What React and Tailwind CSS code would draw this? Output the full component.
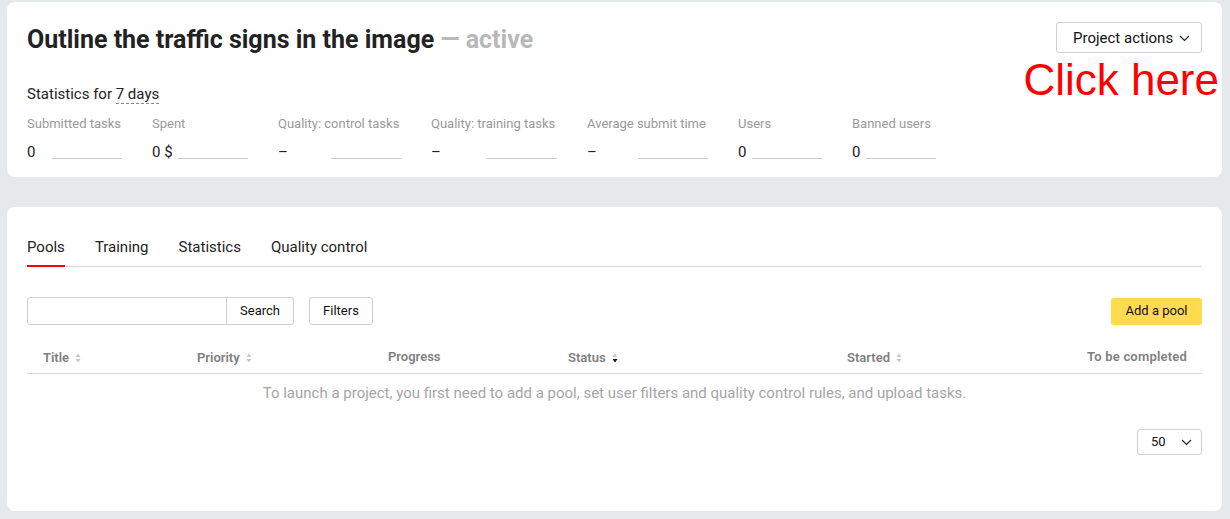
import React from "react";

const font = { fontFamily: "Roboto, 'Liberation Sans', sans-serif" };

function SortIcon({ active }) {
    return (
        <svg width="6" height="10" viewBox="0 0 6 10" className="ml-[6px] inline-block">
            <path d="M3 0.5 L5.5 4 L0.5 4 Z" fill="#c7c7c7" />
            <path d="M3 9.5 L5.5 6 L0.5 6 Z" fill={active ? "#111" : "#c7c7c7"} />
        </svg>
    );
}

function Chevron() {
    return (
        <svg width="11" height="7" viewBox="0 0 11 7" fill="none">
            <path d="M1 1 L5.5 5.5 L10 1" stroke="#222" strokeWidth="1.2" />
        </svg>
    );
}

const stats = [
    { label: "Submitted tasks", value: "0", w: "w-[95px]" },
    { label: "Spent", value: "0 $", w: "w-[96px]" },
    { label: "Quality: control tasks", value: "–", w: "w-[123px]" },
    { label: "Quality: training tasks", value: "–", w: "w-[126px]" },
    { label: "Average submit time", value: "–", w: "w-[121px]" },
    { label: "Users", value: "0", w: "w-[84px]" },
    { label: "Banned users", value: "0", w: "w-[84px]" },
];

export default function App() {
    return (
        <div className="min-h-screen bg-[#e6e9ec] pt-[2px] pl-[7px] pr-[8px] pb-2" style={font}>
            {/* header card */}
            <div className="relative h-[175px] rounded-lg bg-white px-5 pt-5">
                <div className="flex items-start justify-between">
                    <h1 className="mt-[2px] text-[25px] leading-[32px] font-bold text-[#222]">
                        Outline the traffic signs in the image <span className="text-[#b8b8b8]">— active</span>
                    </h1>
                    <button className="flex h-[31px] w-[146px] items-center justify-between rounded-[3px] border border-[#d0d0d0] pl-4 pr-[11px] pt-px text-[15px] text-[#111]">
                        Project actions
                        <Chevron />
                    </button>
                </div>
                <div className="absolute right-[3px] top-[52px] text-[44px] leading-[52px] text-[#ff0000]" style={{ fontFamily: "'Liberation Sans', Arial, sans-serif" }}>
                    Click here
                </div>
                <div className="mt-[28px] text-[15px] leading-5 text-[#222]">
                    Statistics for <span className="border-b border-dashed border-[#888]">7 days</span>
                </div>
                <div className="mt-3 flex gap-[30px]">
                    {stats.map((s) => (
                        <div key={s.label} className={s.w}>
                            <div className="text-[13px] leading-4 text-[#999] whitespace-nowrap">{s.label}</div>
                            <div className="mt-[10px] flex items-end justify-between text-[15px] leading-5 text-[#222]">
                                <span>{s.value}</span>
                                <span className="mb-[3px] h-px w-[70px] bg-[#c8c8c8]" />
                            </div>
                        </div>
                    ))}
                </div>
            </div>

            {/* pools card */}
            <div className="mt-[30px] h-[304px] rounded-lg bg-white px-5 pt-[30px]">
                <div className="flex gap-[30px] border-b border-[#d6d6d6] text-[15px] leading-5 text-[#222]">
                    <div className="-mb-px border-b-2 border-[#ff0000] pb-2">Pools</div>
                    <div className="pb-2">Training</div>
                    <div className="pb-2">Statistics</div>
                    <div className="pb-2">Quality control</div>
                </div>

                <div className="mt-[30px] flex items-center justify-between">
                    <div className="flex items-center">
                        <div className="h-[28px] w-[200px] rounded-l-[3px] border border-[#cfcfcf]" />
                        <button className="h-[28px] w-[67px] rounded-r-[3px] border border-l-0 border-[#cfcfcf] text-[13px] text-[#111]">Search</button>
                        <button className="ml-[15px] h-[28px] w-[64px] rounded-[3px] border border-[#cfcfcf] text-[13px] text-[#111]">Filters</button>
                    </div>
                    <button className="h-[27px] w-[91px] rounded-[3px] bg-[#ffdb4d] text-[13px] text-[#111]">Add a pool</button>
                </div>

                <div className="mt-4 grid h-[33px] grid-cols-[154px_191px_180px_279px_1fr] items-center border-b border-[#d9d9d9] pl-4 pr-[15px] pt-[2px] text-[13px] font-semibold text-[#7f7f7f]">
                    <div className="flex items-center">Title<SortIcon /></div>
                    <div className="flex items-center">Priority<SortIcon /></div>
                    <div className="-mt-[2px]">Progress</div>
                    <div className="flex items-center">Status<SortIcon active /></div>
                    <div className="flex items-center justify-between">
                        <span className="flex items-center">Started<SortIcon /></span>
                        <span className="-mt-[2px] tracking-[0.2px]">To be completed</span>
                    </div>
                </div>

                <div className="flex h-[38px] items-center justify-center text-[15px] text-[#a6a6a6]">
                    To launch a project, you first need to add a pool, set user filters and quality control rules, and upload tasks.
                </div>

                <div className="mt-[17px] flex justify-end">
                    <button className="flex h-[26px] w-[65px] items-center justify-between rounded-[3px] border border-[#cfcfcf] pl-[13px] pr-[9px] text-[13px] text-[#111]">
                        50
                        <Chevron />
                    </button>
                </div>
            </div>
        </div>
    );
}
